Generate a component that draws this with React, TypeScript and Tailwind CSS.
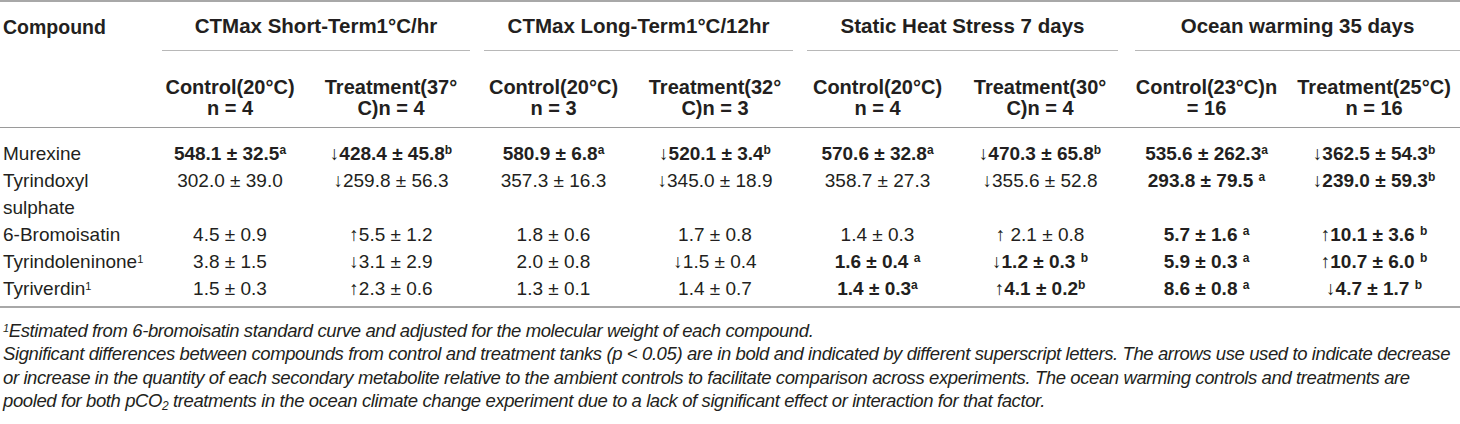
type Cell = {
  v: string;
  bold?: boolean;
  sup?: string;
};

type Row = {
  name: React.ReactNode;
  cells: Cell[];
};

const groups = [
  'CTMax Short-Term1°C/hr',
  'CTMax Long-Term1°C/12hr',
  'Static Heat Stress 7 days',
  'Ocean warming 35 days',
];

const subHeads: [string, string][] = [
  ['Control(20°C)', 'n = 4'],
  ['Treatment(37°', 'C)n = 4'],
  ['Control(20°C)', 'n = 3'],
  ['Treatment(32°', 'C)n = 3'],
  ['Control(20°C)', 'n = 4'],
  ['Treatment(30°', 'C)n = 4'],
  ['Control(23°C)n', '= 16'],
  ['Treatment(25°C)', 'n = 16'],
];

const rows: Row[] = [
  {
    name: 'Murexine',
    cells: [
      { v: '548.1 ± 32.5', bold: true, sup: 'a' },
      { v: '↓428.4 ± 45.8', bold: true, sup: 'b' },
      { v: '580.9 ± 6.8', bold: true, sup: 'a' },
      { v: '↓520.1 ± 3.4', bold: true, sup: 'b' },
      { v: '570.6 ± 32.8', bold: true, sup: 'a' },
      { v: '↓470.3 ± 65.8', bold: true, sup: 'b' },
      { v: '535.6 ± 262.3', bold: true, sup: 'a' },
      { v: '↓362.5 ± 54.3', bold: true, sup: 'b' },
    ],
  },
  {
    name: (
      <>
        Tyrindoxyl
        <br />
        sulphate
      </>
    ),
    cells: [
      { v: '302.0 ± 39.0' },
      { v: '↓259.8 ± 56.3' },
      { v: '357.3 ± 16.3' },
      { v: '↓345.0 ± 18.9' },
      { v: '358.7 ± 27.3' },
      { v: '↓355.6 ± 52.8' },
      { v: '293.8 ± 79.5 ', bold: true, sup: 'a' },
      { v: '↓239.0 ± 59.3', bold: true, sup: 'b' },
    ],
  },
  {
    name: '6-Bromoisatin',
    cells: [
      { v: '4.5 ± 0.9' },
      { v: '↑5.5 ± 1.2' },
      { v: '1.8 ± 0.6' },
      { v: '1.7 ± 0.8' },
      { v: '1.4 ± 0.3' },
      { v: '↑ 2.1 ± 0.8' },
      { v: '5.7 ± 1.6 ', bold: true, sup: 'a' },
      { v: '↑10.1 ± 3.6 ', bold: true, sup: 'b' },
    ],
  },
  {
    name: (
      <>
        Tyrindoleninone<sup className="text-[11px]">1</sup>
      </>
    ),
    cells: [
      { v: '3.8 ± 1.5' },
      { v: '↓3.1 ± 2.9' },
      { v: '2.0 ± 0.8' },
      { v: '↓1.5 ± 0.4' },
      { v: '1.6 ± 0.4 ', bold: true, sup: 'a' },
      { v: '↓1.2 ± 0.3 ', bold: true, sup: 'b' },
      { v: '5.9 ± 0.3 ', bold: true, sup: 'a' },
      { v: '↑10.7 ± 6.0 ', bold: true, sup: 'b' },
    ],
  },
  {
    name: (
      <>
        Tyriverdin<sup className="text-[11px]">1</sup>
      </>
    ),
    cells: [
      { v: '1.5 ± 0.3' },
      { v: '↑2.3 ± 0.6' },
      { v: '1.3 ± 0.1' },
      { v: '1.4 ± 0.7' },
      { v: '1.4 ± 0.3', bold: true, sup: 'a' },
      { v: '↑4.1 ± 0.2', bold: true, sup: 'b' },
      { v: '8.6 ± 0.8 ', bold: true, sup: 'a' },
      { v: '↓4.7 ± 1.7 ', bold: true, sup: 'b' },
    ],
  },
];

export default function App() {
  return (
    <div className="w-[1460px] h-[424px] bg-white text-[#231f20] font-['Liberation_Sans',Arial,sans-serif] overflow-hidden">
      <table className="w-[1460px] table-fixed border-collapse border-t-2 border-[#a8a8a8] text-[19px]">
        <colgroup>
          <col className="w-[155px]" />
          <col className="w-[150px]" />
          <col className="w-[172px]" />
          <col className="w-[153px]" />
          <col className="w-[170px]" />
          <col className="w-[155px]" />
          <col className="w-[170px]" />
          <col className="w-[163px]" />
          <col className="w-[172px]" />
        </colgroup>
        <thead>
          <tr className="h-[50px]">
            <th className="text-left font-bold pl-[3px] align-bottom pb-[9px] text-[19.5px]">Compound</th>
            {groups.map((g, i) => (
              <th key={g} colSpan={2} className="p-0 align-bottom font-bold text-[20.5px]">
                <div
                  className={
                    i === 3
                      ? 'ml-[10px] border-b border-[#b8b8b8] pb-[8px] whitespace-nowrap'
                      : 'mx-[7px] border-b border-[#b8b8b8] pb-[8px] whitespace-nowrap'
                  }
                >
                  {g}
                </div>
              </th>
            ))}
          </tr>
          <tr className="border-b border-[#9a9a9a]">
            <th />
            {subHeads.map(([a, b], i) => (
              <th
                key={i}
                className="pt-[26px] pb-[8px] font-bold text-[20px] leading-[21px] text-center whitespace-nowrap"
              >
                {a}
                <br />
                {b}
              </th>
            ))}
          </tr>
        </thead>
        <tbody className="leading-[27px]">
          {rows.map((r, ri) => (
            <tr key={ri}>
              <td
                className={
                  'pl-[3px] align-top whitespace-nowrap ' +
                  (ri === 0 ? 'pt-[12px]' : '') +
                  (ri === rows.length - 1 ? 'pb-[4px]' : '')
                }
              >
                {r.name}
              </td>
              {r.cells.map((c, ci) => (
                <td
                  key={ci}
                  className={
                    'text-center align-top whitespace-pre ' +
                    (c.bold ? 'font-bold ' : '') +
                    (ri === 0 ? 'pt-[12px]' : '') +
                    (ri === rows.length - 1 ? 'pb-[4px]' : '')
                  }
                >
                  {c.v}
                  {c.sup && <sup className="text-[12px]">{c.sup}</sup>}
                </td>
              ))}
            </tr>
          ))}
        </tbody>
      </table>
      <div className="border-t-2 border-[#a8a8a8] pt-[11px] pl-[3px] italic text-[18.5px] tracking-[-0.4px] leading-[23.3px] whitespace-nowrap">
        <p>
          <sup className="text-[11px]">1</sup>Estimated from 6-bromoisatin standard curve and adjusted for the molecular
          weight of each compound.
        </p>
        <p>
          Significant differences between compounds from control and treatment tanks (p &lt; 0.05) are in bold and
          indicated by different superscript letters. The arrows use used to indicate decrease
          <br />
          or increase in the quantity of each secondary metabolite relative to the ambient controls to facilitate
          comparison across experiments. The ocean warming controls and treatments are
          <br />
          pooled for both pCO<sub className="text-[12px]">2</sub> treatments in the ocean climate change experiment due to
          a lack of significant effect or interaction for that factor.
        </p>
      </div>
    </div>
  );
}
